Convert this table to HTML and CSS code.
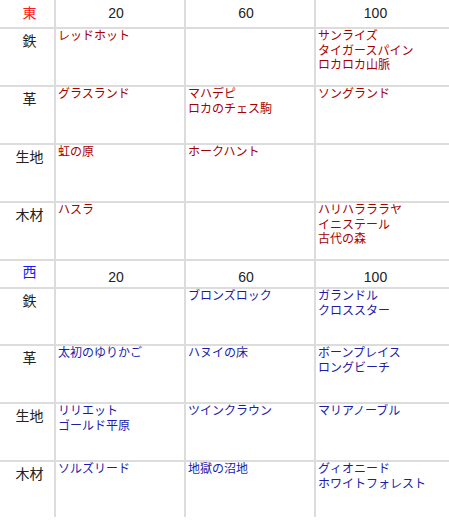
FILE: index.html
```html
<!DOCTYPE html>
<html lang="ja">
<head>
<meta charset="utf-8">
<title>表</title>
<link rel="stylesheet" href="styles.css">
</head>
<body>
<div class="grid">
  <div class="cell corner east-c">東</div>
  <div class="cell num n2">20</div>
  <div class="cell num n3">60</div>
  <div class="cell num n4 endc">100</div>

  <div class="cell lab">鉄</div>
  <div class="cell txt red">レッドホット</div>
  <div class="cell txt red"></div>
  <div class="cell txt red endc">サンライズ<br>タイガースパイン<br>ロカロカ山脈</div>

  <div class="cell lab">革</div>
  <div class="cell txt red">グラスランド</div>
  <div class="cell txt red">マハデピ<br>ロカのチェス駒</div>
  <div class="cell txt red endc">ソングランド</div>

  <div class="cell lab">生地</div>
  <div class="cell txt red">虹の原</div>
  <div class="cell txt red">ホークハント</div>
  <div class="cell txt red endc"></div>

  <div class="cell lab">木材</div>
  <div class="cell txt red">ハスラ</div>
  <div class="cell txt red"></div>
  <div class="cell txt red endc">ハリハラララヤ<br>イニステール<br>古代の森</div>

  <div class="cell corner west-c">西</div>
  <div class="cell num n2 wnum">20</div>
  <div class="cell num n3 wnum">60</div>
  <div class="cell num n4 wnum endc">100</div>

  <div class="cell lab">鉄</div>
  <div class="cell txt blue"></div>
  <div class="cell txt blue">ブロンズロック</div>
  <div class="cell txt blue endc">ガランドル<br>クロススター</div>

  <div class="cell lab">革</div>
  <div class="cell txt blue">太初のゆりかご</div>
  <div class="cell txt blue">ハヌイの床</div>
  <div class="cell txt blue endc">ボーンプレイス<br>ロングビーチ</div>

  <div class="cell lab">生地</div>
  <div class="cell txt blue">リリエット<br>ゴールド平原</div>
  <div class="cell txt blue">ツインクラウン</div>
  <div class="cell txt blue endc">マリアノーブル</div>

  <div class="cell lab endr">木材</div>
  <div class="cell txt blue endr">ソルズリード</div>
  <div class="cell txt blue endr">地獄の沼地</div>
  <div class="cell txt blue endr endc">グィオニード<br>ホワイトフォレスト</div>
</div>
</body>
</html>
```

FILE: styles.css
```css
html, body {
  margin: 0;
  padding: 0;
  background: #ffffff;
}

body {
  font-family: "Liberation Sans", "Noto Sans CJK JP", sans-serif;
  color: #222222;
}

.grid {
  display: grid;
  width: 449px;
  grid-template-columns: 56px 130px 130px 133px;
  grid-template-rows: 29px 58px 58px 58px 58px 28px 57px 58px 58px 55px;
}

.cell {
  box-sizing: border-box;
  border-right: 2px solid #dcdcdc;
  border-bottom: 2px solid #dcdcdc;
}

.endc {
  border-right: none;
}

.endr {
  border-bottom: none;
}

.corner,
.lab {
  font-size: 14px;
  line-height: 17px;
  text-align: center;
  padding-left: 5px;
  padding-top: 4px;
}

.east-c {
  color: #ff1a1a;
  padding-top: 5px;
}

.west-c {
  color: #1a1aff;
  padding-top: 3px;
}

.num {
  font-size: 14px;
  line-height: 17px;
  text-align: center;
  padding-top: 5px;
  color: #222222;
}

.num.wnum {
  padding-top: 7.5px;
}

.n2,
.n3 {
  padding-right: 8px;
}

.n4 {
  padding-right: 14px;
}

.txt {
  font-size: 12px;
  line-height: 14.5px;
  padding-left: 2px;
  padding-top: 0;
}

.red {
  color: #a80000;
}

.blue {
  color: #1c1ca8;
}
```
